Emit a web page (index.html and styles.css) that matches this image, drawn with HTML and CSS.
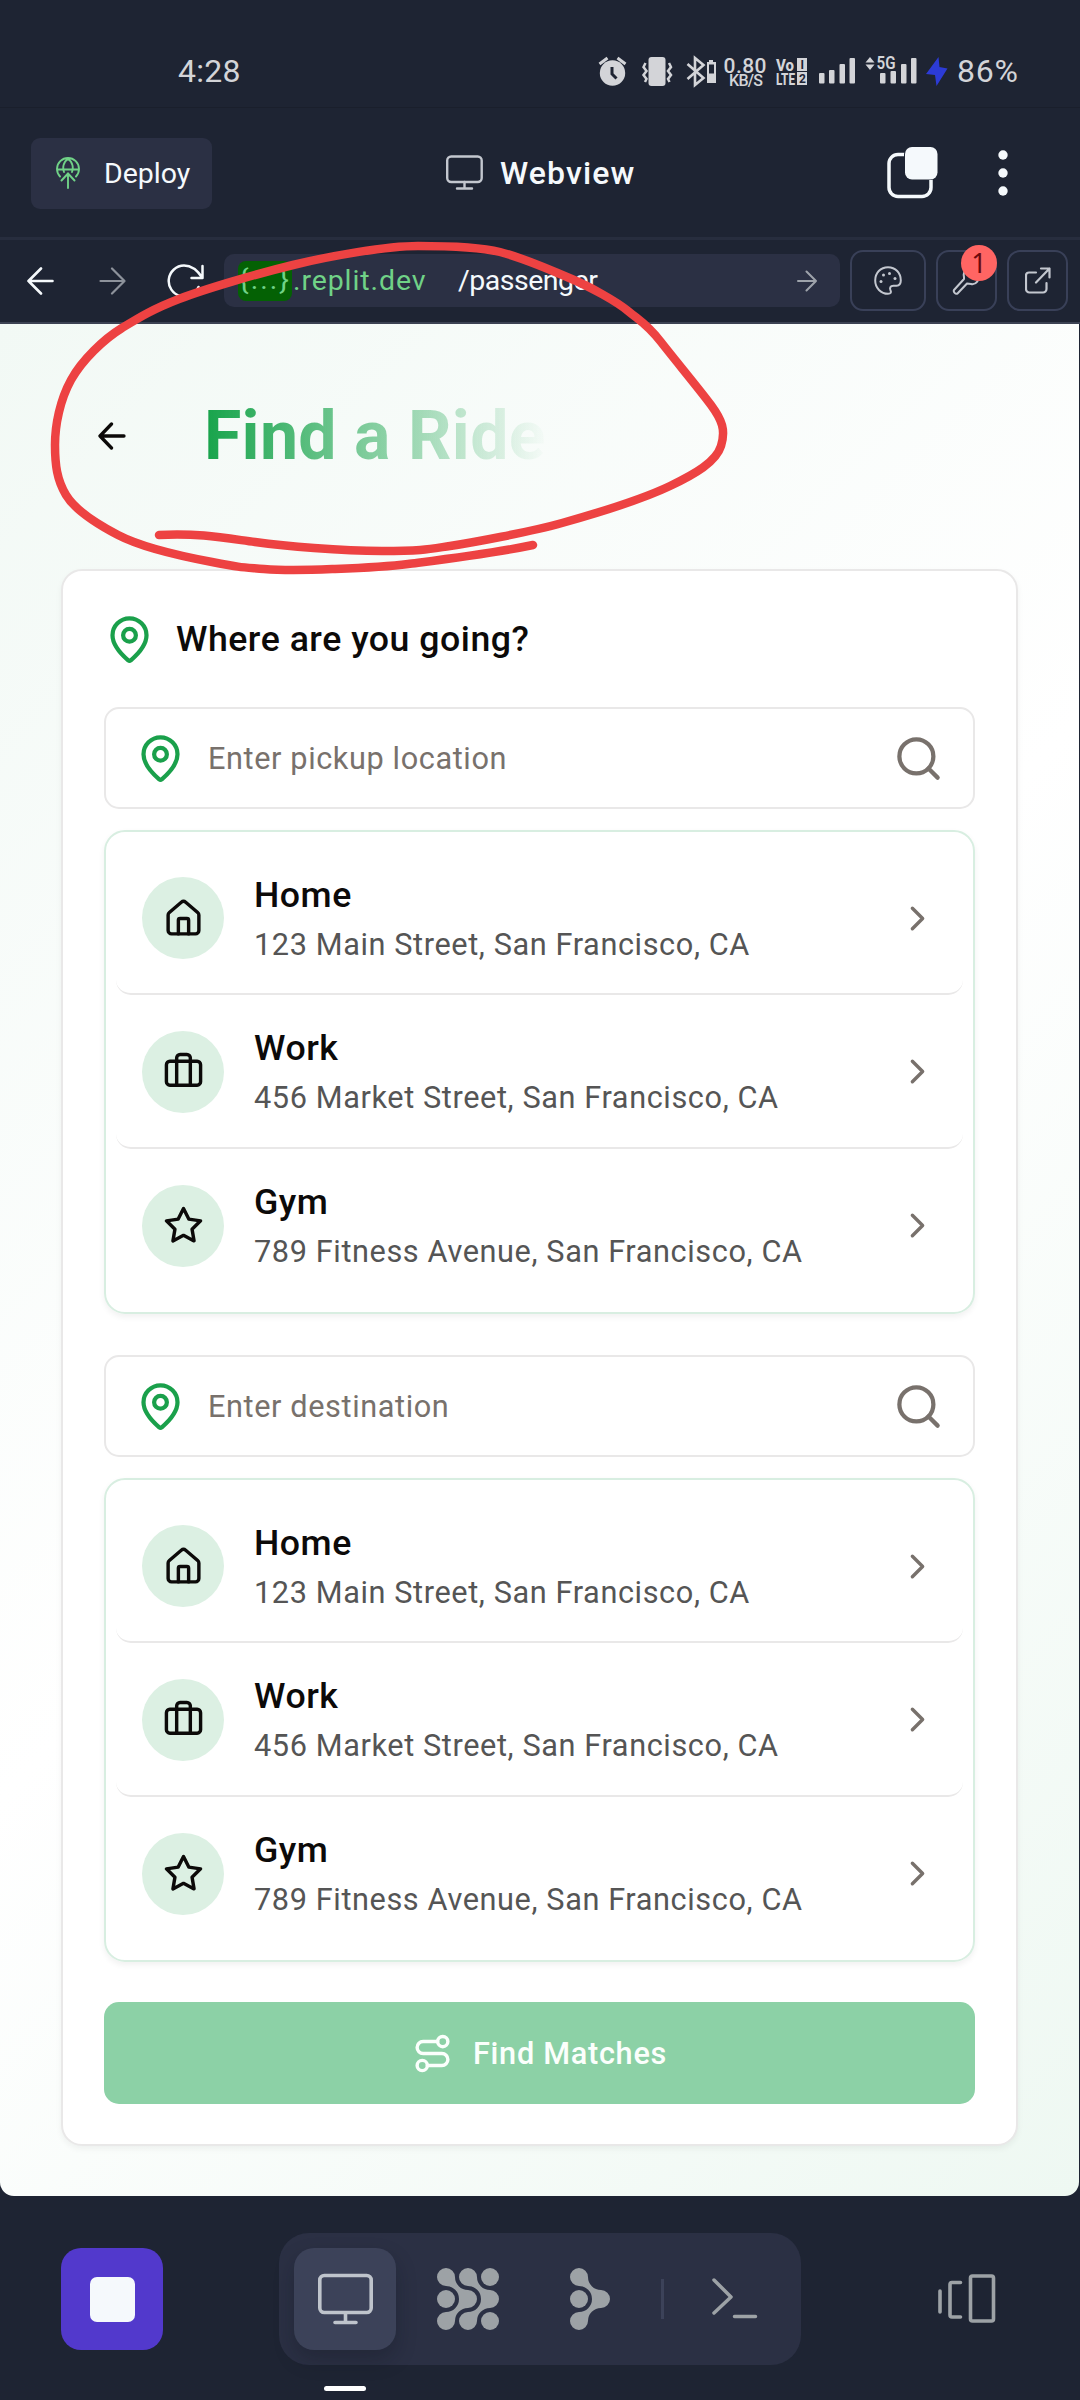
FILE: index.html
```html
<!DOCTYPE html>
<html lang="en">
<head>
<meta charset="utf-8">
<title>Find a Ride</title>
<link rel="stylesheet" href="styles.css">
</head>
<body>
<svg class="defs" width="0" height="0">
  <defs>
    <symbol id="pin" viewBox="0 0 24 24"><path d="M20 10c0 4.993-5.539 10.193-7.399 11.799a1 1 0 0 1-1.202 0C9.539 20.193 4 14.993 4 10a8 8 0 0 1 16 0"/><circle cx="12" cy="10" r="3"/></symbol>
    <symbol id="search" viewBox="0 0 24 24"><circle cx="11" cy="11" r="8"/><path d="m21 21-4.3-4.3"/></symbol>
    <symbol id="home" viewBox="0 0 24 24"><path d="M15 21v-8a1 1 0 0 0-1-1h-4a1 1 0 0 0-1 1v8"/><path d="M3 10a2 2 0 0 1 .709-1.528l7-5.999a2 2 0 0 1 2.582 0l7 5.999A2 2 0 0 1 21 10v9a2 2 0 0 1-2 2H5a2 2 0 0 1-2-2z"/></symbol>
    <symbol id="work" viewBox="0 0 24 24"><path d="M16 20V4a2 2 0 0 0-2-2h-4a2 2 0 0 0-2 2v16"/><rect width="20" height="14" x="2" y="6" rx="2"/></symbol>
    <symbol id="star" viewBox="0 0 24 24"><path d="M12 2l3.09 6.26L22 9.27l-5 4.87 1.18 6.88L12 17.77l-6.18 3.25L7 14.14 2 9.27l6.91-1.01L12 2z"/></symbol>
    <symbol id="chevron" viewBox="0 0 24 24"><path d="m9 18 6-6-6-6"/></symbol>
    <symbol id="agent" viewBox="0 0 40 62"><path d="M0 9A9 9 0 0 1 18 9A13 13 0 0 0 31 22A9 9 0 0 1 31 40A13 13 0 0 0 18 53A9 9 0 1 1 9 44A13 13 0 0 0 9 18A9 9 0 0 1 0 9Z"/></symbol>
  </defs>
</svg>

<header class="status">
  <span class="clock">4:28</span>
  <svg class="status-icons" width="354" height="40" viewBox="594 51 354 40">
    <g fill="#d3d4d8">
      <circle cx="612.5" cy="73" r="12.7"/><path d="M599.5 64l8-6M625.500 64l-8-6" stroke="#d3d4d8" stroke-width="3"/><path d="M612 67v7l4.500 4.500" fill="none" stroke="#1e2433" stroke-width="3"/>
      <rect x="648.500" y="57" width="17" height="29" rx="3"/>
      <path d="M645.500 63l-2 4 3 4-3 4 3 4-1.500 3M669 63l2 4-3 4 3 4-3 4 1.500 3" fill="none" stroke="#d3d4d8" stroke-width="2.500"/>
      <path d="M687.500 64l16 14-8.500 7V58l8.500 7-16 14" fill="none" stroke="#d3d4d8" stroke-width="2.600"/>
      <path d="M709 60h4v2h3v21h-9V62h2zM709 64.500v9h5v-9z" fill-rule="evenodd"/>
      <text x="723.500" y="72.500" font-size="21" font-weight="500" textLength="43">0.80</text>
      <text x="729" y="86" font-size="16" font-weight="500" textLength="34">KB/S</text>
      <text x="776" y="70.500" font-size="17" font-weight="800" textLength="18" lengthAdjust="spacingAndGlyphs">Vo</text>
      <text x="776" y="84.500" font-size="17" font-weight="800" textLength="19" lengthAdjust="spacingAndGlyphs">LTE</text>
      <rect x="797" y="58" width="10" height="13"/><rect x="797" y="72" width="10" height="13"/>
      <g fill="#1e2433" font-size="12" font-weight="700"><text x="800.500" y="69" textLength="3">I</text><text x="799" y="83">2</text></g>
      <rect x="819" y="73" width="5.500" height="10.500" rx="1"/><rect x="829" y="70" width="5.500" height="13.500" rx="1"/><rect x="839.500" y="64" width="5.500" height="19.500" rx="1"/><rect x="849.500" y="58" width="5.500" height="25.500" rx="1"/>
      <path d="M865.500 62.500l4.500-5.500 4.500 5.500zM865.500 64.500l4.500 5.500 4.500-5.500z"/>
      <text x="876.500" y="69" font-size="17.500" font-weight="600" textLength="19" lengthAdjust="spacingAndGlyphs">5G</text>
      <rect x="880" y="73" width="5.500" height="10.500" rx="1"/><rect x="890.500" y="71" width="5.500" height="12.500" rx="1"/><rect x="901" y="64" width="5.500" height="19.500" rx="1"/><rect x="911" y="58" width="5.500" height="25.500" rx="1"/>
      <path d="M938.500 57l1 10 8 1.500-11 17.500-1.500-11-9-1z" fill="#2c3bd6"/>
    </g>
  </svg>
  <span class="percent">86%</span>
</header>

<div class="toolbar">
  <button class="deploy">
    <svg width="24" height="32" viewBox="0 0 24 32" fill="none" stroke="#70d287" stroke-width="1.900" stroke-linecap="round"><path d="M4 19.500a11 11 0 1 1 16 0M1 12.500h22M8 15c-1.500-4-1-10 4-13 5 3 5.500 9 4 13M12 31V17M5.500 23.500l6.500-7 6.500 7"/></svg>
    <span>Deploy</span>
  </button>
  <div class="tab">
    <svg width="37" height="36" viewBox="0 0 37 36" fill="none" stroke="#c3c7cf" stroke-width="2.400"><rect x="1.200" y="1.500" width="34.500" height="25.500" rx="4"/><path d="M18.500 27v6M11 33.500h15" stroke-linecap="round"/></svg>
    <span>Webview</span>
  </div>
  <svg class="pages" width="51" height="52" viewBox="0 0 51 52"><rect x="2" y="7.500" width="42" height="42" rx="9" fill="none" stroke="#f5f9fc" stroke-width="3.500"/><rect x="17" y="0" width="34" height="33" rx="7" fill="#1e2433"/><rect x="18" y="0" width="32.500" height="32.500" rx="7" fill="#f5f9fc"/></svg>
  <svg class="dots" width="10" height="46" viewBox="0 0 10 46" fill="#f5f9fc"><circle cx="5" cy="5" r="4.700"/><circle cx="5" cy="23" r="4.700"/><circle cx="5" cy="41" r="4.700"/></svg>
</div>

<nav class="nav">
  <svg class="nav-back" width="27" height="28" viewBox="0 0 27 28" fill="none" stroke="#f5f9fc" stroke-width="2.600" stroke-linecap="round" stroke-linejoin="round"><path d="M14 1.500L1.500 14 14 26.500M1.500 14h24"/></svg>
  <svg class="nav-fwd" width="27" height="28" viewBox="0 0 27 28" fill="none" stroke="#8d929b" stroke-width="2.200" stroke-linecap="round" stroke-linejoin="round"><path d="M13 1.500L25.500 14 13 26.500M25.500 14h-24"/></svg>
  <svg class="nav-reload" width="38" height="34" viewBox="0 0 38 34" fill="none" stroke="#f5f9fc" stroke-width="2.500" stroke-linecap="round" stroke-linejoin="round"><path d="M35.500 2v12h-11M35.500 14C31 7 25 1.500 17 1.500A15.500 15.500 0 1 0 31.500 23"/></svg>
  <div class="url">
    <span class="url-sub">{...}</span><span class="url-host">.replit.dev</span><span class="url-path">/passenger</span>
    <svg width="20" height="22" viewBox="0 0 20 22" fill="none" stroke="#9ea3ab" stroke-width="2" stroke-linecap="round" stroke-linejoin="round"><path d="M9.500 1.500L19 11l-9.500 9.500M19 11H1"/></svg>
  </div>
  <button class="nav-btn palette"><svg width="28" height="29" viewBox="0 0 28 29" fill="none" stroke="#c3c7cf" stroke-width="2"><path d="M14 1.200C6.500 1.200 1.200 7 1.200 14.500S7 27.800 14 27.800c3 0 3.500-1.500 2.500-3.300-1-2.500-.5-4.500 3-4.700h3c3-.2 4.300-2.300 4.300-5.300C26.800 7 21.500 1.200 14 1.200z"/><g fill="#c3c7cf" stroke="none"><circle cx="7" cy="15.500" r="1.500"/><circle cx="9.500" cy="9" r="1.500"/><circle cx="15.500" cy="7.500" r="1.500"/><circle cx="21" cy="12.500" r="1.500"/></g></svg></button>
  <button class="nav-btn wrench"><svg width="29" height="29" viewBox="0 0 29 29" fill="none" stroke="#c3c7cf" stroke-width="2" stroke-linejoin="round"><path d="M27 7.500l-5 4-4-4 4.500-5.500c-7-2-12 2.500-10.500 9v2L2 24c-1 2 1.500 4.500 3.500 3.500L15 17.500l4 .5c5 1 9-4 8-10.500z"/></svg><span class="badge">1</span></button>
  <button class="nav-btn external"><svg width="26" height="27" viewBox="0 0 26 27" fill="none" stroke="#c3c7cf" stroke-width="2.200" stroke-linecap="round" stroke-linejoin="round"><path d="M11 5.500H4a3 3 0 0 0-3 3V22a3.500 3.500 0 0 0 3.500 3.500H18a3.500 3.500 0 0 0 3.500-3.500v-6M16 1.500h8.500v9M24.500 1.500L11 15.500"/></svg></button>
</nav>

<main class="page">
  <div class="heading">
    <svg width="28" height="28" viewBox="0 0 28 28" fill="none" stroke="#0c0a09" stroke-width="3.300" stroke-linecap="round" stroke-linejoin="round"><path d="M13.500 2L2 14l11.500 12M2 14h24"/></svg>
    <h1>Find a Ride</h1>
  </div>
  <section class="card">
    <h2><svg class="i51 green"><use href="#pin"/></svg>Where are you going?</h2>
    <div class="field"><svg class="i51 green"><use href="#pin"/></svg><span>Enter pickup location</span><svg class="i51 gray"><use href="#search"/></svg></div>
    <div class="list">
      <div class="row"><span class="circle"><svg class="i41"><use href="#home"/></svg></span><div class="place"><b>Home</b><span>123 Main Street, San Francisco, CA</span></div><svg class="i41 gray"><use href="#chevron"/></svg></div>
      <div class="row"><span class="circle"><svg class="i41"><use href="#work"/></svg></span><div class="place"><b>Work</b><span>456 Market Street, San Francisco, CA</span></div><svg class="i41 gray"><use href="#chevron"/></svg></div>
      <div class="row"><span class="circle"><svg class="i41"><use href="#star"/></svg></span><div class="place"><b>Gym</b><span>789 Fitness Avenue, San Francisco, CA</span></div><svg class="i41 gray"><use href="#chevron"/></svg></div>
    </div>
    <div class="field second"><svg class="i51 green"><use href="#pin"/></svg><span>Enter destination</span><svg class="i51 gray"><use href="#search"/></svg></div>
    <div class="list">
      <div class="row"><span class="circle"><svg class="i41"><use href="#home"/></svg></span><div class="place"><b>Home</b><span>123 Main Street, San Francisco, CA</span></div><svg class="i41 gray"><use href="#chevron"/></svg></div>
      <div class="row"><span class="circle"><svg class="i41"><use href="#work"/></svg></span><div class="place"><b>Work</b><span>456 Market Street, San Francisco, CA</span></div><svg class="i41 gray"><use href="#chevron"/></svg></div>
      <div class="row"><span class="circle"><svg class="i41"><use href="#star"/></svg></span><div class="place"><b>Gym</b><span>789 Fitness Avenue, San Francisco, CA</span></div><svg class="i41 gray"><use href="#chevron"/></svg></div>
    </div>
    <button class="find"><svg class="i41" viewBox="0 0 24 24"><circle cx="6" cy="19" r="3"/><path d="M9 19h8.500a3.500 3.500 0 0 0 0-7h-11a3.500 3.500 0 0 1 0-7H15"/><circle cx="18" cy="5" r="3"/></svg>Find Matches</button>
  </section>
</main>

<footer class="bottom">
  <button class="stop"><span></span></button>
  <div class="dock">
    <div class="dock-active"><svg width="55" height="52" viewBox="0 0 55 52" fill="none" stroke="#bfc4cc" stroke-width="3.600"><rect x="1.800" y="2.500" width="51.400" height="37" rx="4.500"/><path d="M27.500 40v9M17 49.500h21" stroke-linecap="round"/></svg></div>
    <svg class="dock-grid" width="62" height="62" viewBox="0 0 62 62" fill="#9da2a6"><use href="#agent" width="40" height="62"/><use href="#agent" x="22" width="40" height="62"/><circle cx="9" cy="31" r="9"/><circle cx="53" cy="9" r="9"/><circle cx="53" cy="53" r="9"/></svg>
    <svg class="dock-agent" width="40" height="62" viewBox="0 0 40 62" fill="#9da2a6"><use href="#agent" width="40" height="62"/><circle cx="9" cy="31" r="9"/></svg>
    <span class="dock-sep"></span>
    <svg class="dock-shell" width="46" height="42" viewBox="0 0 46 42" fill="none" stroke="#9da2a6" stroke-width="3.500" stroke-linecap="round" stroke-linejoin="round"><path d="M2 2l17 17L2 35M22.500 38.500h21"/></svg>
  </div>
  <svg class="switcher" width="58" height="50" viewBox="0 0 58 50" fill="none" stroke="#9da2a6" stroke-width="3.600" stroke-linecap="round" stroke-linejoin="round"><path d="M2 17v21M22.500 8.500H14a2 2 0 0 0-2 2V41a2 2 0 0 0 2 2h8.500"/><rect x="32.500" y="2" width="23" height="45" rx="2"/></svg>
  <span class="handle"></span>
</footer>

<svg class="scribble" width="1080" height="620" viewBox="0 0 1080 620" fill="none" stroke="#ed4242" stroke-width="8.500" stroke-linecap="round" stroke-linejoin="round"><path d="M159 535C200 533 225 538 255 542S340 551 382 551S430 549 450 546S530 532 562 523S645 498 670 486S716 462 721 446S722 420 711 405S675 360 661 342S640 321 628 311S590 287 574 280S520 257 500 252S450 246 418 246S330 256 293 265S205 289 179 299S140 317 122 328S82 360 71 380S55 425 55 445S57 480 66 495S95 523 118 535S180 556 212 562S240 567 264 569S310 570 335 569S385 567 408 564S490 554 533 545"/></svg>
</body>
</html>
```
FILE: styles.css
```css
* { box-sizing: border-box; }
body {
  margin: 0;
  width: 1080px;
  height: 2400px;
  position: relative;
  overflow: hidden;
  background: #1e2433;
  font-family: Roboto, "Liberation Sans", sans-serif;
  display: flex;
  flex-direction: column;
}
.defs { position: absolute; }
button { border: 0; padding: 0; margin: 0; font: inherit; color: inherit; }
svg { display: block; flex: none; }

.status {
  height: 108px;
  flex: none;
  display: flex;
  align-items: center;
  padding: 35px 0 0 178px;
  border-bottom: 1px solid #1a1f2c;
  color: #d3d4d8;
  font-size: 32px;
  line-height: 40px;
}
.clock { width: 416px; letter-spacing: .3px; }
.percent { margin-left: 9px; letter-spacing: .8px; }

.toolbar {
  height: 132px;
  flex: none;
  display: flex;
  align-items: center;
  padding: 1px 72px 0 31px;
  border-bottom: 3px solid #272d3e;
  color: #f5f9fc;
  font-size: 28.500px;
}
.deploy {
  width: 181px;
  height: 71px;
  display: flex;
  align-items: center;
  gap: 24px;
  padding-left: 25px;
  border-radius: 9px;
  background: #2b3044;
}
.tab {
  display: flex;
  align-items: center;
  gap: 17px;
  width: 441px;
  margin-left: 234px;
  font-size: 32px;
  font-weight: 500;
  letter-spacing: 1.100px;
}
.dots { margin-left: 60px; }

.nav {
  height: 84px;
  flex: none;
  display: flex;
  align-items: center;
  padding: 0 0 1px 27px;
  border-bottom: 2px solid #3c4253;
}
.nav-fwd { margin-left: 45px; }
.nav-reload { margin-left: 41px; }
.url {
  width: 616px;
  height: 53px;
  margin-left: 19px;
  padding: 0 23px 0 14px;
  display: flex;
  align-items: center;
  border-radius: 10px;
  background: #2b3044;
  color: #f5f9fc;
  font-size: 28.500px;
}
.url svg { margin-left: auto; }
.url-sub {
  width: 54px;
  height: 40px;
  line-height: 38px;
  text-align: center;
  border-radius: 8px;
  background: #046104;
  color: #70d287;
  letter-spacing: 2px;
}
.url-host { width: 166px; color: #70d287; letter-spacing: .9px; padding-left: 1px; }
.url-path { letter-spacing: -.5px; }
.nav-btn {
  position: relative;
  width: 61px;
  height: 61px;
  margin-left: 10px;
  display: flex;
  align-items: center;
  justify-content: center;
  border: 2px solid #394058;
  border-radius: 13px;
  background: none;
}
.nav-btn.palette { width: 76px; }
.badge {
  position: absolute;
  left: 23px;
  top: -7px;
  width: 36px;
  height: 36px;
  border-radius: 50%;
  background: #ff6563;
  color: #6b0a0e;
  font: 27px/35px "Noto Sans", sans-serif;
  text-align: center;
}

.page {
  width: 1079px;
  height: 1872px;
  flex: none;
  padding: 0 61px;
  border-radius: 0 0 14px 14px;
  background: linear-gradient(135deg, #f2f9f5 0%, #fff 50%, #eef8f2 100%);
}
.heading {
  height: 245px;
  display: flex;
  align-items: center;
  gap: 78px;
  padding: 0 0 21px 37px;
}
h1 {
  margin: 0;
  padding-right: 4px;
  font-size: 68px;
  font-weight: 700;
  line-height: 84px;
  letter-spacing: .3px;
  color: transparent;
  background: linear-gradient(90deg, #16a34a, rgba(22, 163, 74, 0));
  -webkit-background-clip: text;
  background-clip: text;
}
.card {
  width: 957px;
  height: 1577px;
  padding: 0 41px;
  border: 2px solid #e9e8e8;
  border-radius: 21px;
  background: #fff;
  box-shadow: 0 3px 6px rgba(0, 0, 0, .05);
}
h2 {
  display: flex;
  align-items: center;
  gap: 21px;
  height: 136px;
  margin: 0;
  font-size: 35.700px;
  font-weight: 500;
  letter-spacing: .5px;
  color: #0c0a09;
}
.i51, .i41 { width: 51px; height: 51px; fill: none; stroke: currentColor; stroke-width: 2; stroke-linecap: round; stroke-linejoin: round; }
.i41 { width: 41px; height: 41px; }
.green { color: #1aa04b; }
.gray { color: #78716c; }
.field {
  height: 102px;
  display: flex;
  align-items: center;
  padding: 0 29px;
  border: 2px solid #e9e8e8;
  border-radius: 15px;
  font-size: 30.700px;
  letter-spacing: .6px;
  color: #78716c;
}
.field span { flex: 1; margin-left: 22px; }
.second { margin-top: 41px; }
.list {
  height: 484.500px;
  margin-top: 20.500px;
  padding: 10px;
  border: 2px solid #d8eee1;
  border-radius: 21px;
  box-shadow: 0 3px 6px rgba(0, 0, 0, .06);
}
.row {
  height: 153.670px;
  display: flex;
  align-items: center;
  padding: 2px 25px 0 26px;
  border-bottom: 2px solid #e9e8e8;
  border-radius: 15px;
}
.row:last-child { border-color: transparent; }
.circle {
  width: 82px;
  height: 82px;
  display: flex;
  align-items: center;
  justify-content: center;
  border-radius: 50%;
  background: #dcf0e3;
  color: #0c0a09;
}
.place { flex: 1; display: flex; flex-direction: column; margin-left: 30px; }
.place b { font-size: 35.700px; line-height: 53px; font-weight: 500; letter-spacing: .5px; color: #0c0a09; }
.place span { font-size: 30.700px; line-height: 46px; letter-spacing: .6px; color: #555; }
.find {
  width: 100%;
  height: 102px;
  margin-top: 40px;
  display: flex;
  align-items: center;
  justify-content: center;
  gap: 20px;
  border-radius: 15px;
  background: #8cd1a6;
  color: #fbfffc;
  font-size: 30.700px;
  font-weight: 500;
  letter-spacing: .7px;
}

.bottom { position: relative; height: 204px; flex: none; display: flex; align-items: center; padding: 2px 0 0 61px; }
.stop {
  width: 102px;
  height: 102px;
  display: flex;
  align-items: center;
  justify-content: center;
  border-radius: 20px;
  background: #5239cc;
}
.stop span { width: 45px; height: 45px; border-radius: 7px; background: #f5f9fc; }
.dock {
  width: 522px;
  height: 132px;
  margin-left: 116px;
  padding-left: 15px;
  display: flex;
  align-items: center;
  border-radius: 30px;
  background: #2b3044;
}
.dock-active {
  width: 102px;
  height: 102px;
  display: flex;
  align-items: center;
  justify-content: center;
  border-radius: 20px;
  background: #3c4259;
  box-shadow: 0 10px 20px rgba(10, 14, 25, .25);
}
.dock-grid { margin-left: 41px; }
.dock-agent { margin-left: 71px; }
.dock-sep { width: 3px; height: 40px; margin-left: 51px; background: #3c4259; }
.dock-shell { margin-left: 48px; }
.switcher { margin-left: 137px; }
.handle {
  position: absolute;
  left: 324px;
  bottom: 9px;
  width: 42px;
  height: 5px;
  border-radius: 3px;
  background: #fff;
}
.scribble { position: absolute; left: 0; top: 0; pointer-events: none; }
```
